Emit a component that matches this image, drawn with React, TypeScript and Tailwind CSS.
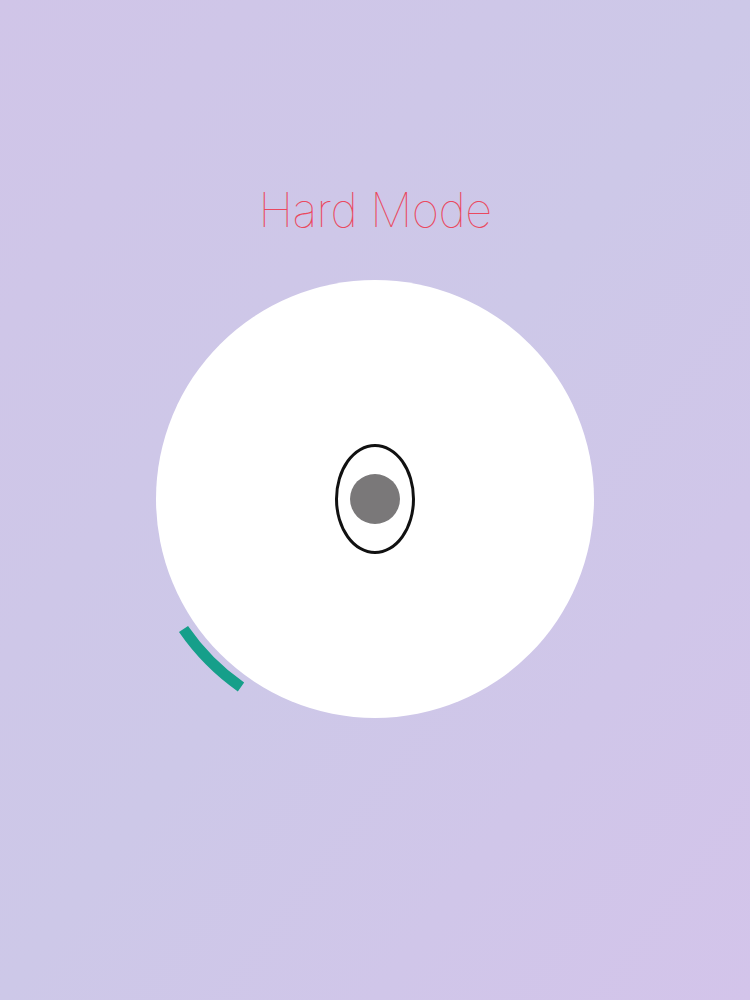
import React from "react";

export default function App() {
  return (
    <div className="w-[750px] h-[1000px] bg-gradient-to-br from-[#d0c5e8] via-[#cdc8e8] to-[#d3c4ea] flex flex-col items-center">
      <h1
        className="mt-[180px] h-[60px] leading-[60px] text-[47px] text-[#ea4960] tracking-[-0.5px]"
        style={{ fontFamily: "Inter, 'Open Sans', sans-serif", fontWeight: 100 }}
      >
        Hard Mode
      </h1>
      <div className="relative mt-[40px] w-[438px] h-[438px] rounded-full bg-white flex items-center justify-center">
        <div className="w-[80px] h-[110px] rounded-[50%] border-[3px] border-[#111] flex items-center justify-center">
          <div className="w-[50px] h-[50px] rounded-full bg-[#7a7879]" />
        </div>
        <svg
          className="absolute left-[-30px] top-[-30px]"
          width="498"
          height="498"
          viewBox="0 0 498 498"
        >
          <path
            d="M 57.5 379 A 231 231 0 0 0 115 437"
            fill="none"
            stroke="#169f8a"
            strokeWidth="11"
          />
        </svg>
      </div>
    </div>
  );
}
